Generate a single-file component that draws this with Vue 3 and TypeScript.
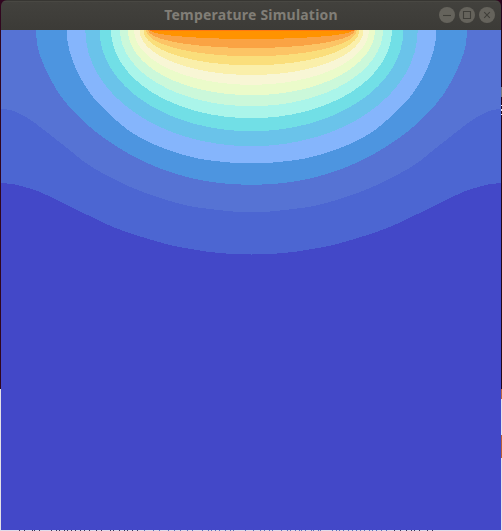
<script setup lang="ts">
type Point = [number, number]

interface Band {
  color: string
  path: string
}

const CENTER = 250.5

// Passes a smooth curve through the sampled isotherm and its mirror image.
function isotherm(samples: Point[]): string {
  const mirrored: Point[] = samples
    .slice(0, -1)
    .reverse()
    .map(([x, y]) => [CENTER * 2 - x, y])
  const p = [...samples, ...mirrored]
  let d = `M${p[0][0]} -2L${p[0][0]} ${p[0][1]}`
  for (let i = 0; i < p.length - 1; i++) {
    const a = p[Math.max(0, i - 1)]
    const b = p[i]
    const c = p[i + 1]
    const e = p[Math.min(p.length - 1, i + 2)]
    d += `C${b[0] + (c[0] - a[0]) / 6} ${b[1] + (c[1] - a[1]) / 6} ${c[0] - (e[0] - b[0]) / 6} ${c[1] - (e[1] - b[1]) / 6} ${c[0]} ${c[1]}`
  }
  return `${d}L${p[p.length - 1][0]} -2Z`
}

function halfEllipse(rx: number, ry: number): string {
  return `M${CENTER - rx} 0A${rx} ${ry} 0 0 0 ${CENTER + rx} 0Z`
}

const bands: Band[] = [
  { color: '#4c66d2', path: isotherm([[0, 153], [14, 154.5], [27, 158], [40, 162.5], [62, 173], [82, 182.8], [99, 191], [116, 198.5], [142, 207.3], [169, 215], [184, 218], [209, 222], [229, 223.8], [250.5, 224.5]]) },
  { color: '#5673d4', path: isotherm([[0, 79], [9, 80], [17, 83], [29, 89.5], [43, 100], [66, 118], [87, 134.5], [116, 150.7], [142, 162], [169, 171], [194, 177], [232, 181.5], [250.5, 182]]) },
  { color: '#4d95e0', path: isotherm([[35, 0], [36.3, 15], [40.7, 30], [49, 48], [59, 65], [74, 83], [92.5, 100], [109, 112], [127, 123.3], [146, 133], [169, 142], [199, 150], [226, 153.7], [250.5, 154.7]]) },
  { color: '#85b5fc', path: isotherm([[65.5, 0], [67, 14], [71, 29], [79, 47], [89, 63], [102, 78], [127, 100], [149, 112.5], [169, 120.5], [197, 128.5], [229, 132.5], [250.5, 133.2]]) },
  { color: '#6ac3ea', path: halfEllipse(166.2, 116.2) },
  { color: '#71dfe6', path: halfEllipse(152, 101.3) },
  { color: '#aaf5ea', path: halfEllipse(140.5, 88.2) },
  { color: '#cbf8da', path: halfEllipse(131.5, 76.2) },
  { color: '#ebfbca', path: halfEllipse(123.5, 65.2) },
  { color: '#f8f6d5', path: halfEllipse(117.4, 54.8) },
  { color: '#faefaa', path: halfEllipse(112, 45) },
  { color: '#fade7b', path: halfEllipse(108, 35.3) },
  { color: '#fcc465', path: halfEllipse(105.3, 26.3) },
  { color: '#faa344', path: halfEllipse(103.4, 18) },
  { color: '#ff9300', path: halfEllipse(101.5, 9) },
  { color: '#ff7912', path: 'M149 0H353V1H149Z' },
]

// Glyph tops of the document showing below the window.
const darkMarks = [19, 24, 32, 34, 39, 51, 56, 59, 64, 67, 71, 75, 80, 84, 89, 96, 101, 110, 113, 119, 124, 127, 132, 137, 394, 400, 406, 411, 414, 419, 427, 432]
const blueMarks = [144, 153, 159, 168, 174, 180, 187, 192, 202, 208, 211, 215, 219, 225, 230, 233, 245, 253, 260, 264, 269, 272, 281, 287, 290, 295, 299, 301, 305, 311, 313, 318, 320, 332, 336, 339, 343, 348, 352, 356, 360, 364, 369, 372, 376, 381, 386]
const marks = (xs: number[]): string => xs.map((x) => `M${x} 0h1v1h-1z`).join('')
</script>

<template>
  <main class="desktop">
    <div class="edge left"></div>
    <section class="window">
      <header class="titlebar">
        <h1>Temperature Simulation</h1>
        <nav class="controls">
          <button aria-label="Minimize">
            <svg viewBox="0 0 16 16"><path d="M4 8.5h8" /></svg>
          </button>
          <button aria-label="Maximize">
            <svg viewBox="0 0 16 16"><path d="M4.5 4.5h7v7h-7z" /></svg>
          </button>
          <button aria-label="Close">
            <svg viewBox="0 0 16 16"><path d="M5.2 5.2l5.6 5.6M10.8 5.2l-5.6 5.6" /></svg>
          </button>
        </nav>
      </header>
      <svg class="plot" viewBox="0 0 500 500" shape-rendering="crispEdges">
        <path v-for="band in bands" :key="band.color" :d="band.path" :fill="band.color" />
      </svg>
    </section>
    <div class="edge right"></div>
    <svg class="behind" viewBox="0 0 502 1" shape-rendering="crispEdges">
      <path :d="marks(darkMarks)" fill="#3a3454" />
      <path :d="marks(blueMarks)" fill="#5a74bb" />
    </svg>
  </main>
</template>

<style>
body {
  margin: 0;
}
</style>

<style scoped>
.desktop {
  display: grid;
  grid-template-columns: 1px 500px 1px;
  grid-template-rows: 530px 1px;
  width: 502px;
  height: 531px;
  overflow: hidden;
  background: linear-gradient(#30061f 0 389px, #e4e1e7 389px);
}
.left {
  background: linear-gradient(#30061f 0 389px, #e4e1e7 389px);
}
.right {
  background: linear-gradient(#24051a 0 87px, #77747c 87px 97px, #24051a 97px 105px, #eee 105px 106px, #24051a 106px 109px, #eee 109px 111px, #24051a 111px 114px, #eee 114px 115px, #24051a 115px 389px, #ba6642 389px 399px, #e4e1f0 399px 435px, #b85e37 435px 458px, #e4e1f0 458px);
}
.window {
  display: flex;
  flex-direction: column;
  min-width: 0;
}
.titlebar {
  display: grid;
  grid-template-columns: 1fr auto 1fr;
  align-items: center;
  box-sizing: border-box;
  height: 30px;
  padding-right: 6px;
  border-radius: 6px 6px 0 0;
  background: linear-gradient(#373632 0 1px, #494843 1px 2px, #42413d 2px, #3c3b37);
}
h1 {
  grid-column: 2;
  margin: 0 0 0 6px;
  color: #817e77;
  font: bold 14px/28px "Noto Sans", "Open Sans", sans-serif;
  letter-spacing: 0.2px;
  white-space: nowrap;
}
.controls {
  display: flex;
  justify-self: end;
  gap: 4px;
}
button {
  width: 16px;
  height: 16px;
  padding: 0;
  border: 0;
  border-radius: 50%;
  background: #65635c;
}
button svg {
  display: block;
  width: 16px;
  height: 16px;
}
button path {
  fill: none;
  stroke: #3f3e39;
  stroke-width: 1.1;
}
.plot {
  display: block;
  width: 500px;
  height: 500px;
  background: #4348c8;
}
.behind {
  grid-column: 1 / -1;
  display: block;
  width: 502px;
  height: 1px;
  background: #dedbea;
}
</style>
